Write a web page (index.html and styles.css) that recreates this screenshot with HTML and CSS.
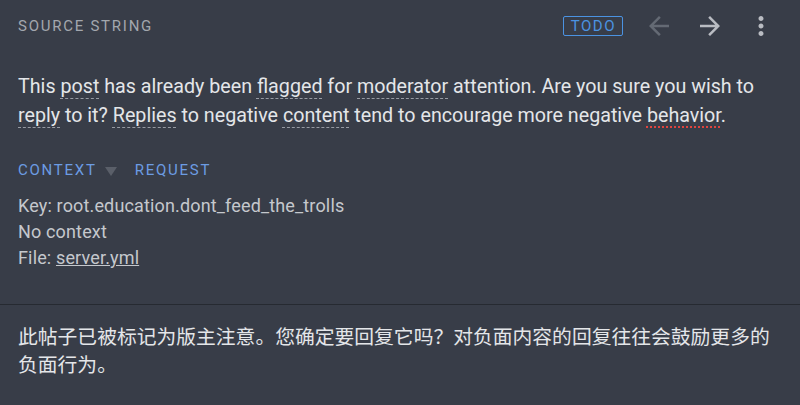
FILE: index.html
```html
<!DOCTYPE html>
<html lang="en">

    <head>
        <meta charset="UTF-8">
        <meta name="viewport" content="width=device-width, initial-scale=1.0">
        <title>Source String</title>
        <link rel="stylesheet" href="styles.css">
    </head>

    <body>

        <section class="source">
            <div class="source-header">
                <span class="label">Source string</span>
                <div class="actions">
                    <span class="badge">TODO</span>
                    <button class="icon-btn disabled" title="Previous">
                        <svg width="30" height="30" viewBox="0 0 24 24"><path d="M20 11H7.83l5.59-5.59L12 4l-8 8 8 8 1.41-1.41L7.83 13H20v-2z" fill="currentColor"/></svg>
                    </button>
                    <button class="icon-btn" title="Next">
                        <svg width="30" height="30" viewBox="0 0 24 24"><path d="M12 4l-1.41 1.41L16.17 11H4v2h12.17l-5.58 5.59L12 20l8-8z" fill="currentColor"/></svg>
                    </button>
                    <button class="icon-btn" title="More">
                        <svg width="30" height="30" viewBox="0 0 24 24"><path d="M12 8c1.1 0 2-.9 2-2s-.9-2-2-2-2 .9-2 2 .9 2 2 2zm0 2c-1.1 0-2 .9-2 2s.9 2 2 2 2-.9 2-2-.9-2-2-2zm0 6c-1.1 0-2 .9-2 2s.9 2 2 2 2-.9 2-2-.9-2-2-2z" fill="currentColor"/></svg>
                    </button>
                </div>
            </div>

            <p class="source-text">This <span class="term">post</span> has already been <span class="term">flagged</span> for <span class="term">moderator</span> attention. Are you sure you wish to <span class="term">reply</span> to it? <span class="term">Replies</span> to negative <span class="term">content</span> tend to encourage more negative <span class="spell">behavior</span>.</p>

            <div class="tabs">
                <span class="tab">Context <span class="caret"></span></span>
                <span class="tab">Request</span>
            </div>

            <div class="meta">
                <div>Key: root.education.dont_feed_the_trolls</div>
                <div>No context</div>
                <div>File: <a href="#" class="file-link">server.yml</a></div>
            </div>
        </section>

        <section class="translation">
            <p lang="zh-CN">此帖子已被标记为版主注意。您确定要回复它吗？对负面内容的回复往往会鼓励更多的负面行为。</p>
        </section>

    </body>

</html>
```

FILE: styles.css
```css
body {
    margin: 0;
    font-family: Roboto, "Noto Sans CJK SC", sans-serif;
    background-color: #383d48;
    color: #e4e6e9;
}

.source {
    padding: 11px 18px 33px;
    border-bottom: 1px solid #262a31;
}

.source-header {
    display: flex;
    align-items: center;
    justify-content: space-between;
    height: 30px;
}

.label {
    text-transform: uppercase;
    font-size: 15px;
    letter-spacing: 1.75px;
    color: #a3a7ae;
}

.actions {
    display: flex;
    align-items: center;
    gap: 21px;
    padding-right: 6px;
}

.badge {
    font-size: 15px;
    letter-spacing: 1.5px;
    color: #4b93e2;
    border: 1px solid #4b93e2;
    border-radius: 2px;
    padding: 0 6px 0 7px;
    line-height: 18px;
}

.icon-btn {
    background: none;
    border: none;
    padding: 0;
    width: 30px;
    height: 30px;
    color: #b9bcc2;
    display: flex;
    align-items: center;
    justify-content: center;
    cursor: pointer;
}

.icon-btn.disabled {
    color: #646a74;
}

.source-text {
    font-size: 19.7px;
    line-height: 29px;
    margin: 31px 0 0;
}

.term {
    text-decoration: underline dashed #979ba3;
    text-decoration-thickness: 1px;
    text-underline-offset: 5px;
}

.spell {
    text-decoration: underline dotted #e0443e;
    text-decoration-thickness: 2px;
    text-underline-offset: 4px;
}

.tabs {
    display: flex;
    gap: 17px;
    margin-top: 31px;
    line-height: 18px;
}

.tab {
    text-transform: uppercase;
    font-size: 15px;
    letter-spacing: 1.75px;
    color: #6c9ce3;
    display: flex;
    align-items: center;
}

.caret {
    display: inline-block;
    margin: 2px 1px 0 8px;
    border-left: 6px solid transparent;
    border-right: 6px solid transparent;
    border-top: 9px solid #5a5f69;
}

.meta {
    margin-top: 14px;
    font-size: 18px;
    letter-spacing: 0.15px;
    line-height: 26px;
    color: #c5c8cd;
}

.file-link {
    color: #c5c8cd;
}

.translation {
    padding: 19px 18px;
}

.translation p {
    margin: 0;
    font-size: 19.8px;
    line-height: 28px;
}
```
